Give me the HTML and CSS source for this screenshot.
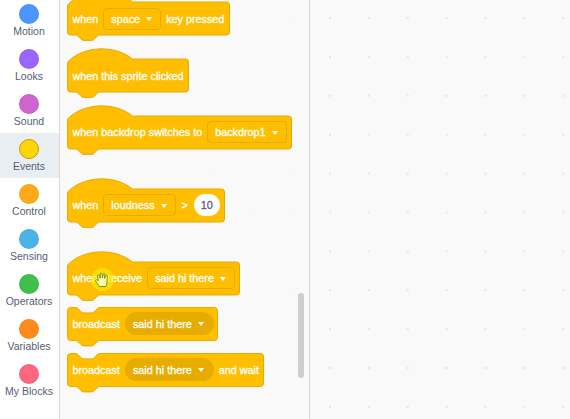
FILE: index.html
```html
<!DOCTYPE html>
<html lang="en">
<head>
    <meta charset="UTF-8">
    <title>Scratch blocks palette</title>
    <link rel="stylesheet" href="styles.css">
</head>
<body>
    <div class="editor">
        <nav class="categories">
            <div class="category"><span class="dot motion"></span><span class="label">Motion</span></div>
            <div class="category"><span class="dot looks"></span><span class="label">Looks</span></div>
            <div class="category"><span class="dot sound"></span><span class="label">Sound</span></div>
            <div class="category selected"><span class="dot events"></span><span class="label">Events</span></div>
            <div class="category"><span class="dot control"></span><span class="label">Control</span></div>
            <div class="category"><span class="dot sensing"></span><span class="label">Sensing</span></div>
            <div class="category"><span class="dot operators"></span><span class="label">Operators</span></div>
            <div class="category"><span class="dot variables"></span><span class="label">Variables</span></div>
            <div class="category"><span class="dot myblocks"></span><span class="label">My Blocks</span></div>
        </nav>

        <div class="workspace">
            <section class="palette">
                <!-- hat top of this one is scrolled off -->
                <div class="block hat first">
                    <svg class="shape" width="163" height="54"><path d="M.5 19C17.500 1 48.500 1 65.500 16H159.500a3 3 0 0 1 3 3V46a3 3 0 0 1-3 3H32.800c-1.350 0-2 .68-2.700 1.350l-2.700 2.700c-.68.68-1.350 1.350-2.700 1.350h-8.100c-1.350 0-2-.68-2.700-1.350l-2.700-2.700c-.68-.68-1.350-1.350-2.700-1.350H3.500a3 3 0 0 1-3-3Z"/></svg>
                    <div class="row"><span>when</span><span class="field">space<i class="arrow"></i></span><span>key pressed</span></div>
                </div>

                <div class="block hat">
                    <svg class="shape" width="122" height="50"><path d="M.5 14C17.500-3 48.500-3 65.500 11H118.500a3 3 0 0 1 3 3V41a3 3 0 0 1-3 3H32.800c-1.350 0-2 .68-2.700 1.350l-2.700 2.700c-.68.68-1.350 1.350-2.700 1.350h-8.100c-1.350 0-2-.68-2.700-1.350l-2.700-2.700c-.68-.68-1.350-1.350-2.700-1.350H3.500a3 3 0 0 1-3-3Z"/></svg>
                    <div class="row"><span>when this sprite clicked</span></div>
                </div>

                <div class="block hat">
                    <svg class="shape" width="225" height="50"><path d="M.5 14C17.500-3 48.500-3 65.500 11H221.500a3 3 0 0 1 3 3V41a3 3 0 0 1-3 3H32.800c-1.350 0-2 .68-2.700 1.350l-2.700 2.700c-.68.68-1.350 1.350-2.700 1.350h-8.100c-1.350 0-2-.68-2.700-1.350l-2.700-2.700c-.68-.68-1.350-1.350-2.700-1.350H3.500a3 3 0 0 1-3-3Z"/></svg>
                    <div class="row"><span>when backdrop switches to</span><span class="field">backdrop1<i class="arrow"></i></span></div>
                </div>

                <div class="block hat gap">
                    <svg class="shape" width="158" height="50"><path d="M.5 14C17.500-3 48.500-3 65.500 11H154.500a3 3 0 0 1 3 3V41a3 3 0 0 1-3 3H32.800c-1.350 0-2 .68-2.700 1.350l-2.700 2.700c-.68.68-1.350 1.350-2.700 1.350h-8.100c-1.350 0-2-.68-2.700-1.350l-2.700-2.700c-.68-.68-1.350-1.350-2.700-1.350H3.500a3 3 0 0 1-3-3Z"/></svg>
                    <div class="row"><span>when</span><span class="field">loudness<i class="arrow"></i></span><span class="op">&gt;</span><span class="number">10</span></div>
                </div>

                <div class="block hat gap">
                    <svg class="shape" width="173" height="50"><path d="M.5 14C17.500-3 48.500-3 65.500 11H169.500a3 3 0 0 1 3 3V41a3 3 0 0 1-3 3H32.800c-1.350 0-2 .68-2.700 1.350l-2.700 2.700c-.68.68-1.350 1.350-2.700 1.350h-8.100c-1.350 0-2-.68-2.700-1.350l-2.700-2.700c-.68-.68-1.350-1.350-2.700-1.350H3.500a3 3 0 0 1-3-3Z"/></svg>
                    <div class="row"><span>when I receive</span><span class="field">said hi there<i class="arrow"></i></span></div>
                </div>

                <div class="block stack">
                    <svg class="shape" width="151" height="39"><path d="M.5 3.500a3 3 0 0 1 3-3H8.500c1.350 0 2 .68 2.700 1.350l2.700 2.700c.68.68 1.350 1.350 2.700 1.350h8.100c1.350 0 2-.68 2.700-1.350l2.700-2.700c.68-.68 1.350-1.350 2.700-1.350H147.500a3 3 0 0 1 3 3V30.500a3 3 0 0 1-3 3H32.800c-1.350 0-2 .68-2.700 1.350l-2.700 2.700c-.68.68-1.350 1.350-2.700 1.350h-8.100c-1.350 0-2-.68-2.700-1.350l-2.700-2.700c-.68-.68-1.350-1.350-2.700-1.350H3.500a3 3 0 0 1-3-3Z"/></svg>
                    <div class="row"><span>broadcast</span><span class="pill">said hi there<i class="arrow"></i></span></div>
                </div>

                <div class="block stack">
                    <svg class="shape" width="197" height="39"><path d="M.5 3.500a3 3 0 0 1 3-3H8.500c1.350 0 2 .68 2.700 1.350l2.700 2.700c.68.68 1.350 1.350 2.700 1.350h8.100c1.350 0 2-.68 2.700-1.350l2.700-2.700c.68-.68 1.350-1.350 2.700-1.350H193.500a3 3 0 0 1 3 3V30.500a3 3 0 0 1-3 3H32.800c-1.350 0-2 .68-2.700 1.350l-2.700 2.700c-.68.68-1.350 1.350-2.700 1.350h-8.100c-1.350 0-2-.68-2.700-1.350l-2.700-2.700c-.68-.68-1.350-1.350-2.700-1.350H3.500a3 3 0 0 1-3-3Z"/></svg>
                    <div class="row"><span>broadcast</span><span class="pill">said hi there<i class="arrow"></i></span><span>and wait</span></div>
                </div>
            </section>

            <div class="scrollbar"></div>
        </div>

        <!-- mouse highlight from the screen recorder -->
        <div class="pointer">
            <svg width="15" height="16" viewBox="0 0 16 17"><path d="M4.500 15.500C3.500 13.500 1.500 11.500.8 9.500.4 8.300 1.800 7.700 2.800 8.600L3.500 9.300 2.700 4.200C2.500 3 4 2.600 4.500 3.800L5.500 6.500 5.600 2C5.700.8 7.300.8 7.500 2L8 6.200 8.800 2.300C9.100 1.200 10.600 1.500 10.500 2.700L10.100 6.800 11.500 4C12 3 13.400 3.500 13.100 4.700 12.600 7 13 9.500 12.800 11.500 12.700 13 12 14.500 11.500 15.500Z"/></svg>
        </div>
    </div>
</body>
</html>
```

FILE: styles.css
```css
:root {
    --block: #ffbf00;
    --block-dark: #e6ac00;
    --text: #575e75;
}

* {
    box-sizing: border-box;
}

body {
    margin: 0;
    overflow: hidden;
    font-family: "Liberation Sans", Arial, sans-serif;
}

.editor {
    position: relative;
    display: flex;
    width: 570px;
    height: 419px;
    overflow: hidden;
    background: #fff;
}

/* category column */
.categories {
    flex: none;
    width: 60px;
    height: 421px;
    margin-top: -2px;
    border-right: 1px solid #d9d9d9;
    background: #fff;
}

.category {
    display: flex;
    flex-direction: column;
    align-items: center;
    height: 45px;
    padding: 6px 1px 0 0;
    color: var(--text);
}

.category.selected {
    background: #e9eef2;
}

.dot {
    width: 20px;
    height: 20px;
    border-radius: 50%;
    border: 1px solid rgba(0, 0, 0, 0.06);
}

.label {
    font-size: 10.500px;
    line-height: 14px;
    white-space: nowrap;
}

.motion { background: #4c97ff; }
.looks { background: #9966ff; }
.sound { background: #cf63cf; }
.events { background: #ffd500; border-color: #cc9900; }
.control { background: #ffab19; }
.sensing { background: #4cb3e8; }
.operators { background: #40bf4a; }
.variables { background: #ff8c1a; }
.myblocks { background: #ff6680; }

/* workspace with dot grid, palette sits on top of it */
.workspace {
    position: relative;
    flex: 1;
    height: 100%;
    background-color: #f9f9f9;
    background-image: radial-gradient(circle at 1px 1px, #e6e6e6 1px, transparent 1.400px);
    background-size: 38.900px 38.900px;
    background-position: 35.600px 17px;
}

.palette {
    width: 250px;
    height: 100%;
    padding-left: 7px;
    border-right: 1px solid #d4d4d4;
    background: rgba(249, 249, 249, 0.85);
    overflow: hidden;
}

.block {
    position: relative;
    color: #fff;
    font-size: 10.800px;
    -webkit-text-stroke: 0.3px;
}

.block.hat {
    height: 50px;
    margin-bottom: 6.700px;
}

.block.first {
    height: 53px;
    margin-top: -14px;
    margin-bottom: 9px;
}

.block.gap {
    margin-top: 23px;
}

.block.stack {
    height: 39px;
    margin-bottom: 7px;
}

.shape {
    position: absolute;
    top: 0;
    left: 0;
    display: block;
    overflow: visible;
}

.shape path {
    fill: var(--block);
    stroke: var(--block-dark);
    stroke-width: 1;
}

.row {
    position: relative;
    display: flex;
    align-items: center;
    gap: 5px;
    height: 33px;
    padding-left: 5.500px;
    white-space: nowrap;
}

.block.hat .row {
    top: 11px;
}

.block.first .row {
    top: 16px;
}

.field {
    display: flex;
    align-items: center;
    height: 22px;
    padding: 0 8px 0 7px;
    border: 1px solid var(--block-dark);
    border-radius: 4px;
}

.pill {
    display: flex;
    align-items: center;
    height: 23px;
    padding: 0 10px 0 8px;
    border-radius: 12px;
    background: #e6ac00;
}

.arrow {
    width: 0;
    height: 0;
    margin-left: 6px;
    margin-top: 1px;
    border-left: 3.500px solid transparent;
    border-right: 3.500px solid transparent;
    border-top: 4px solid #fff;
}

.op {
    margin: 0 1px;
}

.number {
    display: flex;
    align-items: center;
    justify-content: center;
    width: 26px;
    height: 22px;
    border-radius: 11px;
    background: #fff;
    color: var(--text);
}

.scrollbar {
    position: absolute;
    top: 293px;
    left: 238px;
    width: 6px;
    height: 85px;
    border-radius: 3px;
    background: #cecece;
}

.pointer {
    position: absolute;
    top: 268px;
    left: 91px;
    display: flex;
    align-items: center;
    justify-content: center;
    width: 23px;
    height: 23px;
    border-radius: 50%;
    background: rgba(255, 240, 0, 0.6);
}

.pointer path {
    fill: #ffffa0;
    stroke: #6a8a20;
    stroke-width: 1;
}
```
